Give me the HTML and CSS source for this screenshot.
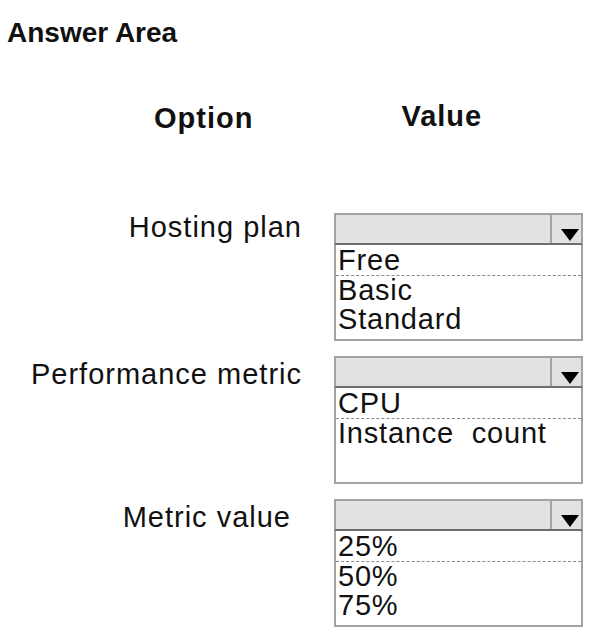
FILE: index.html
```html
<!DOCTYPE html>
<html lang="en">
<head>
    <meta charset="UTF-8">
    <title>Answer Area</title>
    <link rel="stylesheet" href="styles.css">
</head>
<body>
    <div class="answer-area">
        <h1 class="title">Answer Area</h1>

        <!-- Column headings -->
        <div class="heads">
            <span class="head-option">Option</span>
            <span class="head-value">Value</span>
        </div>

        <div class="rows">
            <!-- Hosting plan -->
            <div class="row">
                <div class="label label-high">Hosting plan</div>
                <div class="select">
                    <div class="select-head">
                        <div class="select-value"></div>
                        <div class="select-arrow">
                            <svg width="18" height="12" viewBox="0 0 18 12"><polygon points="0,0 18,0 9,12" fill="#000"/></svg>
                        </div>
                    </div>
                    <ul class="select-list">
                        <li class="selected">Free</li>
                        <li>Basic</li>
                        <li>Standard</li>
                    </ul>
                </div>
            </div>

            <!-- Performance metric -->
            <div class="row">
                <div class="label">Performance metric</div>
                <div class="select">
                    <div class="select-head">
                        <div class="select-value"></div>
                        <div class="select-arrow">
                            <svg width="18" height="12" viewBox="0 0 18 12"><polygon points="0,0 18,0 9,12" fill="#000"/></svg>
                        </div>
                    </div>
                    <ul class="select-list">
                        <li class="selected">CPU</li>
                        <li>Instance&nbsp; count</li>
                    </ul>
                </div>
            </div>

            <!-- Metric value -->
            <div class="row">
                <div class="label label-inset">Metric value</div>
                <div class="select">
                    <div class="select-head">
                        <div class="select-value"></div>
                        <div class="select-arrow">
                            <svg width="18" height="12" viewBox="0 0 18 12"><polygon points="0,0 18,0 9,12" fill="#000"/></svg>
                        </div>
                    </div>
                    <ul class="select-list">
                        <li class="selected">25%</li>
                        <li>50%</li>
                        <li>75%</li>
                    </ul>
                </div>
            </div>
        </div>
    </div>
</body>
</html>
```

FILE: styles.css
```css
/* Reset */
* {
    margin: 0;
    padding: 0;
    box-sizing: border-box;
}

body {
    font-family: "Liberation Sans", Arial, sans-serif;
    color: #111;
    background-color: #fff;
}

.answer-area {
    width: 592px;
    height: 642px;
}

.title {
    font-size: 28px;
    font-weight: bold;
    line-height: 34px;
    padding: 16px 0 0 7px;
}

/* Column headings */
.heads {
    display: flex;
    margin-top: 51px;
    font-size: 29px;
    font-weight: bold;
    line-height: 34px;
    letter-spacing: 1px;
}

.head-option {
    margin-left: 154px;
}

.head-value {
    margin-left: 148px;
    position: relative;
    top: -2px;
}

/* Rows of label + dropdown */
.rows {
    display: flex;
    flex-direction: column;
    gap: 15px;
    margin-top: 78px;
}

.row {
    display: grid;
    grid-template-columns: 302px 249px;
    column-gap: 32px;
}

.label {
    text-align: right;
    font-size: 29px;
    line-height: 34px;
    letter-spacing: 1px;
    padding-top: 1px;
}

.label-high {
    padding-top: 0;
    margin-top: -3px;
}

.label-inset {
    padding-right: 11px;
}

/* Dropdown look */
.select {
    display: flex;
    flex-direction: column;
}

.select-head {
    display: flex;
    height: 32px;
    background-color: #e2e2e2;
    border: 2px solid #a3a3a3;
    border-bottom: 2px solid #6e6e6e;
}

.select-value {
    flex: 1;
}

.select-arrow {
    width: 31px;
    border-left: 2px solid #a3a3a3;
    display: flex;
    align-items: flex-end;
    justify-content: flex-end;
    padding: 0 2px 2px 0;
}

.select-arrow svg {
    display: block;
}

.select-list {
    list-style: none;
    height: 96px;
    border: 2px solid #a3a3a3;
    border-top: none;
    background-color: #fff;
    font-size: 29px;
    line-height: 29px;
    letter-spacing: 0.8px;
    padding-left: 2px;
}

.select-list li.selected {
    border-bottom: 1px dashed #8a8a8a;
    line-height: 30px;
    margin-left: -2px;
    padding-left: 2px;
}
```
